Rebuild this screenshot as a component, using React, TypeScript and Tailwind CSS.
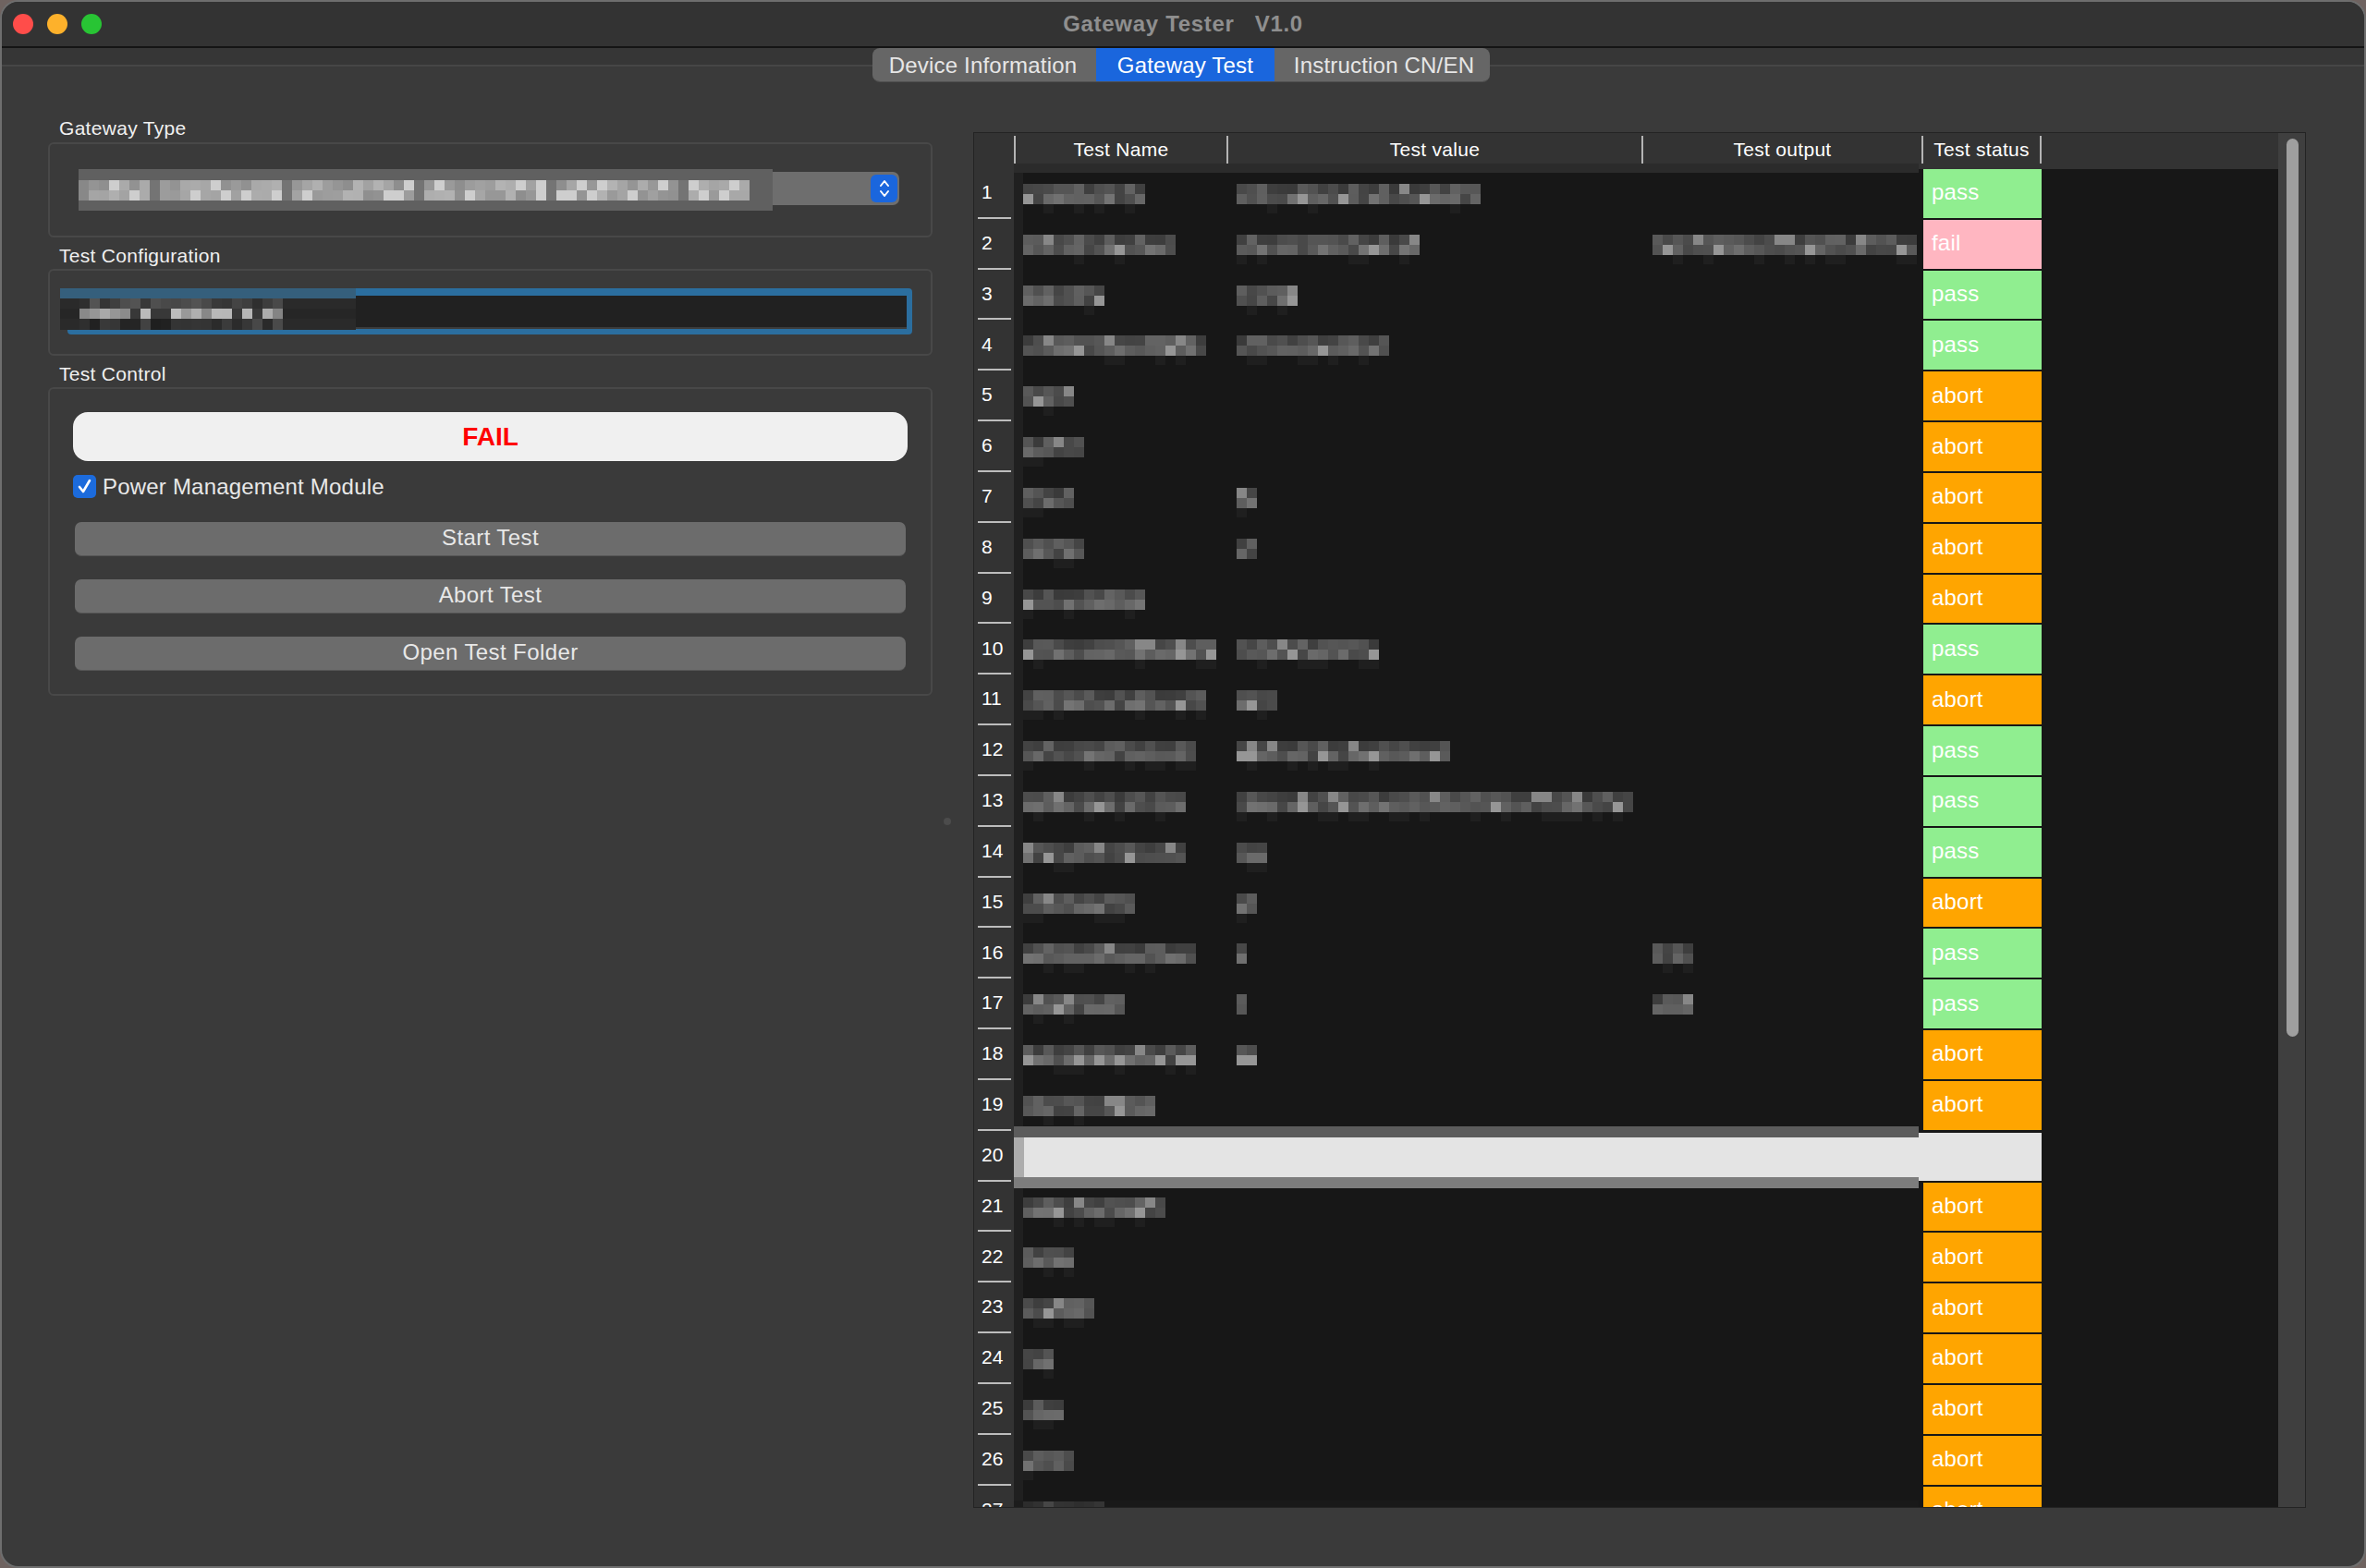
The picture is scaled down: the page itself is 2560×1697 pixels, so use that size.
import { Fragment } from "react";

type Status = "pass" | "fail" | "abort" | "";

type Row = { name: number; value: number; output: number; status: Status };

const rows: Row[] = [
  { name: 12, value: 24, output: 0, status: "pass" },
  { name: 15, value: 18, output: 26, status: "fail" },
  { name: 8, value: 6, output: 0, status: "pass" },
  { name: 18, value: 15, output: 0, status: "pass" },
  { name: 5, value: 0, output: 0, status: "abort" },
  { name: 6, value: 0, output: 0, status: "abort" },
  { name: 5, value: 2, output: 0, status: "abort" },
  { name: 6, value: 2, output: 0, status: "abort" },
  { name: 12, value: 0, output: 0, status: "abort" },
  { name: 19, value: 14, output: 0, status: "pass" },
  { name: 18, value: 4, output: 0, status: "abort" },
  { name: 17, value: 21, output: 0, status: "pass" },
  { name: 16, value: 39, output: 0, status: "pass" },
  { name: 16, value: 3, output: 0, status: "pass" },
  { name: 11, value: 2, output: 0, status: "abort" },
  { name: 17, value: 1, output: 4, status: "pass" },
  { name: 10, value: 1, output: 4, status: "pass" },
  { name: 17, value: 2, output: 0, status: "abort" },
  { name: 13, value: 0, output: 0, status: "abort" },
  { name: 0, value: 0, output: 0, status: "" },
  { name: 14, value: 0, output: 0, status: "abort" },
  { name: 5, value: 0, output: 0, status: "abort" },
  { name: 7, value: 0, output: 0, status: "abort" },
  { name: 3, value: 0, output: 0, status: "abort" },
  { name: 4, value: 0, output: 0, status: "abort" },
  { name: 5, value: 0, output: 0, status: "abort" },
  { name: 8, value: 0, output: 0, status: "abort" },
];

const statusClr = (s: Status) =>
  s === "pass" ? "bg-[#90ee90]" : s === "fail" ? "bg-[#ffb6c1]" : s === "abort" ? "bg-[#ffa500]" : "bg-[#e4e4e4]";

// small repeatable noise so the blurred cells stay the same on every render
const noise = (n: number) => {
  const x = Math.sin(n * 127.1 + 11.7) * 43758.5453;
  return x - Math.floor(x);
};

const gray = (v: number) => `rgb(${v},${v},${v})`;

function Mosaic({ cells, seed }: { cells: number; seed: number }) {
  const idx = Array.from({ length: cells }, (_, i) => i);
  return (
    <div className="flex flex-col blur-[0.6px]">
      <div className="flex h-[11px]">
        {idx.map((i) => {
          const r = noise(seed + i * 3.1);
          return <div key={i} className="w-[11px]" style={{ backgroundColor: gray(r > 0.92 ? 135 : 58 + Math.floor(r * 46)) }} />;
        })}
      </div>
      <div className="flex h-[11px]">
        {idx.map((i) => {
          const r = noise(seed + 40 + i * 5.3);
          return <div key={i} className="w-[11px]" style={{ backgroundColor: gray(r > 0.88 ? 150 : 66 + Math.floor(r * 58)) }} />;
        })}
      </div>
      <div className="flex h-[10px]">
        {idx.map((i) => (
          <div key={i} className="w-[11px]" style={{ backgroundColor: noise(seed + 90 + i) > 0.72 ? "#1f1f1f" : "transparent" }} />
        ))}
      </div>
    </div>
  );
}

function ComboMosaic() {
  const idx = Array.from({ length: 66 }, (_, i) => i);
  return (
    <div className="absolute left-0 top-[-3px] h-[45px] w-[751px] bg-[#606060] pt-[12px] blur-[0.5px]">
      {[0, 1].map((r) => (
        <div key={r} className="flex h-[11px]">
          {idx.map((i) => {
            const n = noise(i * 2.7 + r * 31 + 5);
            const v = i === 0 ? 136 : i % 13 === 7 ? 116 : n > 0.78 ? 206 : 142 + Math.floor(n * 50);
            return <div key={i} className="w-[11px]" style={{ backgroundColor: gray(v) }} />;
          })}
        </div>
      ))}
    </div>
  );
}

function ConfigMosaic() {
  const idx = Array.from({ length: 20 }, (_, i) => i);
  return (
    <div className="absolute left-[-8px] top-0 flex h-[45px] w-[320px] flex-col blur-[0.5px]">
      <div className="h-[11px] bg-[#355f7c]" />
      <div className="flex h-[11px] bg-[#2a2a2a] pl-[21px]">
        {idx.map((i) => (
          <div key={i} className="w-[11px]" style={{ backgroundColor: gray(44 + Math.floor(noise(i + 3) * 40)) }} />
        ))}
      </div>
      <div className="flex h-[11px] bg-[#262626] pl-[21px]">
        {idx.map((i) => {
          const n = noise(i * 1.9 + 20);
          return <div key={i} className="w-[11px]" style={{ backgroundColor: gray(n > 0.8 ? 56 : 130 + Math.floor(n * 80)) }} />;
        })}
      </div>
      <div className="flex h-[12px] bg-[#2a2a2a] pl-[21px]">
        {idx.map((i) => (
          <div key={i} className="w-[11px]" style={{ backgroundColor: gray(30 + Math.floor(noise(i + 60) * 50)) }} />
        ))}
      </div>
    </div>
  );
}

function Group({ title, className, children }: { title: string; className: string; children: React.ReactNode }) {
  return (
    <Fragment>
      <div className="h-[24px] pl-[12px] text-[21px] leading-[22px] tracking-[0.3px] text-[#f0f0f0]">{title}</div>
      <div className={"rounded-[6px] border-2 border-[#484848] " + className}>{children}</div>
    </Fragment>
  );
}

function ActionButton({ label }: { label: string }) {
  return (
    <button className="mx-[2px] h-[37px] rounded-[7px] border-b border-[#555] bg-[#6c6c6c] pb-[2px] text-[24px] leading-[34px] tracking-[0.4px] text-[#e8e8e8]">
      {label}
    </button>
  );
}

function HeaderCell({ label, className }: { label: string; className: string }) {
  return (
    <div className={"flex h-[30px] items-center justify-center border-l-2 border-[#b4b4b4] text-[21px] tracking-[0.3px] text-white " + className}>
      {label}
    </div>
  );
}

function TableRow({ row, n }: { row: Row; n: number }) {
  const selected = n === 20;
  return (
    <div className="relative flex h-[54.83px]">
      <div className="flex w-[43px] shrink-0 flex-col bg-[#333333]">
        <div className="flex flex-1 items-center pb-[2px] pl-[8px] text-[21px] text-white">{n}</div>
        <div className="mb-[1px] ml-[4px] h-[2px] w-[36px] bg-[#bdbdbd]" />
      </div>
      <div className="w-[10px] shrink-0 bg-[#202020]" />
      <div className="w-[231px] shrink-0 pt-[16px]">{row.name > 0 && <Mosaic cells={row.name} seed={n * 17} />}</div>
      <div className="w-[450px] shrink-0 pt-[16px]">{row.value > 0 && <Mosaic cells={row.value} seed={n * 29 + 7} />}</div>
      {selected ? (
        <Fragment>
          <div className="w-[288px] shrink-0" />
          <div className="mb-[2px] mt-[1px] w-[133px] shrink-0 bg-[#e4e4e4]" />
        </Fragment>
      ) : (
        <Fragment>
          <div className="w-[293px] shrink-0 pt-[16px]">{row.output > 0 && <Mosaic cells={row.output} seed={n * 41 + 3} />}</div>
          <div className={"mb-[2px] flex w-[128px] shrink-0 items-center pb-[2px] pl-[9px] text-[24px] tracking-[0.2px] text-white " + statusClr(row.status)}>
            {row.status}
          </div>
        </Fragment>
      )}
      {selected && (
        <div className="absolute left-[43px] top-[-6px] z-10 flex h-[67px] w-[979px] flex-col">
          <div className="h-[12px] bg-[#5c5c5c]" />
          <div className="flex h-[43px]">
            <div className="w-[11px] bg-[#adadad]" />
            <div className="flex-1 bg-[#e4e4e4]" />
          </div>
          <div className="flex-1 bg-[#7d7d7d]" />
        </div>
      )}
    </div>
  );
}

export default function App() {
  return (
    <div className="h-[1697px] w-[2560px] overflow-hidden bg-[#6f6360] font-['Liberation_Sans',Arial,sans-serif]">
      <div className="flex h-full flex-col overflow-hidden rounded-[20px] border-2 border-[#6e6e6e] bg-[#3a3a3a]">
        {/* title bar */}
        <div className="relative flex h-[50px] shrink-0 items-center justify-center border-b-2 border-[#141414] bg-[#333333]">
          <div className="absolute left-[12px] top-[13px] flex gap-[15px]">
            <div className="h-[22px] w-[22px] rounded-full bg-[#ff4d4a]" />
            <div className="h-[22px] w-[22px] rounded-full bg-[#fdb12b]" />
            <div className="h-[22px] w-[22px] rounded-full bg-[#28c434]" />
          </div>
          <span className="whitespace-pre pb-[1px] text-[24px] font-bold tracking-[0.7px] text-[#8f8f8f]">Gateway Tester   V1.0</span>
        </div>

        {/* tabs hang over the pane's top line */}
        <div className="relative z-10 flex h-[18px] shrink-0 justify-center bg-[#363636] pr-[4px]">
          <div className="flex h-[37px] overflow-hidden rounded-[8px] border-b border-[#505050] text-[24px] leading-[37px] tracking-[0.2px]">
            <div className="w-[242px] bg-[#666666] pr-[3px] text-center text-[#e6e6e6]">Device Information</div>
            <div className="w-[193px] bg-[#1a66dd] text-center text-white">Gateway Test</div>
            <div className="w-[233px] bg-[#666666] pl-[4px] text-center text-[#e6e6e6]">Instruction CN/EN</div>
          </div>
        </div>

        <div className="relative flex flex-1 border-t-2 border-[#464646]">
          {/* left controls */}
          <div className="ml-[50px] flex w-[957px] shrink-0 flex-col pt-[56px]">
            <Group title="Gateway Type" className="mt-[2px] h-[103px] pl-[31px] pr-[34px] pt-[30px]">
              <div className="relative h-[36px] rounded-r-[7px] bg-[#6e6e6e]">
                <ComboMosaic />
                <div className="absolute right-[2px] top-[3px] flex h-[30px] w-[29px] items-center justify-center rounded-[6px] bg-[#1a66dd]">
                  <svg width="18" height="24" viewBox="0 0 18 24" fill="none" stroke="#ffffff" strokeWidth="2" strokeLinecap="round" strokeLinejoin="round">
                    <path d="M5 9 L9 4 L13 9" />
                    <path d="M5 15 L9 20 L13 15" />
                  </svg>
                </div>
              </div>
            </Group>
            <div className="h-[9px]" />
            <Group title="Test Configuration" className="mt-[1px] h-[94px] pl-[19px] pr-[20px] pt-[19px]">
              <div className="relative h-[50px] rounded-[4px] border-x-[6px] border-b-[6px] border-t-[8px] border-[#2b6e9f]">
                <div className="h-full border-b-2 border-[#3c3c3c] bg-[#212121]" />
                <div className="absolute left-[-6px] top-[-8px]">
                  <ConfigMosaic />
                </div>
              </div>
            </Group>
            <div className="h-[9px]" />
            <Group title="Test Control" className="mt-[1px] flex h-[334px] flex-col px-[25px] pt-[25px]">
              <div className="flex h-[53px] items-center justify-center rounded-[16px] bg-[#f0f0f0] text-[28px] font-bold text-[#ff0000]">FAIL</div>
              <div className="mt-[15px] flex h-[25px] items-center gap-[7px] text-[24px] tracking-[0.2px] text-[#e8e8e8]">
                <div className="flex h-[25px] w-[25px] items-center justify-center rounded-[5px] bg-[#1c6bdc]">
                  <svg width="19" height="19" viewBox="0 0 19 19" fill="none" stroke="#ffffff" strokeWidth="2.6" strokeLinecap="round" strokeLinejoin="round">
                    <path d="M4 10 L8 15 L15 3" />
                  </svg>
                </div>
                Power Management Module
              </div>
              <div className="mt-[26px] flex flex-col gap-[25px]">
                <ActionButton label="Start Test" />
                <ActionButton label="Abort Test" />
                <ActionButton label="Open Test Folder" />
              </div>
            </Group>
          </div>

          {/* splitter handle */}
          <div className="absolute left-[1019px] top-[813px] h-[8px] w-[8px] rounded-full bg-[#4c4c4c]" />

          {/* results table */}
          <div className="ml-[44px] mt-[71px] flex h-[1489px] w-[1442px] shrink-0 border border-[#232323] bg-[#171717]">
            <div className="relative flex-1 overflow-hidden">
              <div className="flex h-[39px] items-start bg-[#333333] pl-[43px] pt-[3px]">
                <HeaderCell label="Test Name" className="w-[230px]" />
                <HeaderCell label="Test value" className="w-[449px]" />
                <HeaderCell label="Test output" className="w-[303px]" />
                <HeaderCell label="Test status" className="w-[130px] border-r-2" />
              </div>
              <div className="absolute left-[43px] top-[33px] z-10 h-[10px] w-[979px] bg-[#2b2b2b]" />
              {rows.map((r, i) => (
                <TableRow key={i} row={r} n={i + 1} />
              ))}
              <div className="absolute bottom-0 left-[43px] z-10 h-[7px] w-[979px] bg-[#1a1a1a]/60" />
            </div>
            <div className="w-[29px] shrink-0 bg-[#3f3f3f] pl-[9px] pt-[6px]">
              <div className="h-[972px] w-[13px] rounded-full bg-[#9f9f9f]" />
            </div>
          </div>
        </div>
      </div>
    </div>
  );
}
